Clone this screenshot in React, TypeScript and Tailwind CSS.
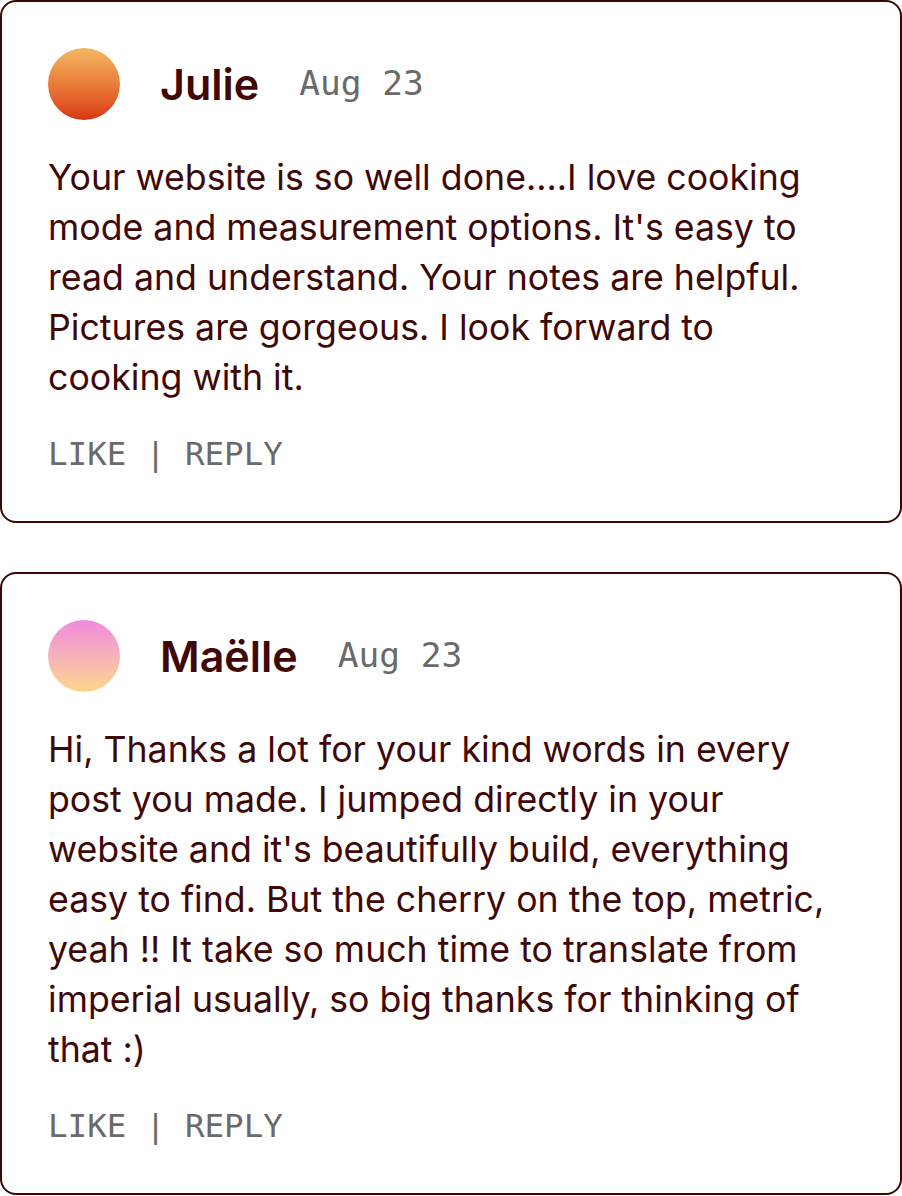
const comments = [
  {
    name: 'Julie',
    date: 'Aug 23',
    avatar: 'bg-gradient-to-b from-[#f4b860] to-[#d8340f]',
    text: "Your website is so well done....I love cooking mode and measurement options. It's easy to read and understand. Your notes are helpful. Pictures are gorgeous. I look forward to cooking with it.",
  },
  {
    name: 'Maëlle',
    date: 'Aug 23',
    avatar: 'bg-gradient-to-b from-[#f088dc] to-[#fed688]',
    text: "Hi, Thanks a lot for your kind words in every post you made. I jumped directly in your website and it's beautifully build, everything easy to find. But the cherry on the top, metric, yeah !! It take so much time to translate from imperial usually, so big thanks for thinking of that :)",
  },
];

export default function App() {
  return (
    <div className="flex flex-col gap-[49px] w-[902px] bg-white font-['Inter',sans-serif] text-[#400707]">
      {comments.map((c) => (
        <div key={c.name} className="border-2 border-[#3d0606] rounded-[16px] px-[46px] pt-[46px] pb-[47px]">
          <div className="flex items-center">
            <div className={`w-[72px] h-[72px] rounded-full shrink-0 ${c.avatar}`} />
            <span className="ml-[40px] text-[43px] font-semibold">{c.name}</span>
            <span className="ml-[40px] text-[34.5px] text-[#6a6a6a] font-['DejaVu_Sans_Mono',monospace]">{c.date}</span>
          </div>
          <p className="mt-[32px] text-[35.7px] leading-[50px]">{c.text}</p>
          <div className="mt-[32px] text-[32.5px] leading-[40px] text-[#6a6a6a] font-['DejaVu_Sans_Mono',monospace]">
            LIKE | REPLY
          </div>
        </div>
      ))}
    </div>
  );
}
